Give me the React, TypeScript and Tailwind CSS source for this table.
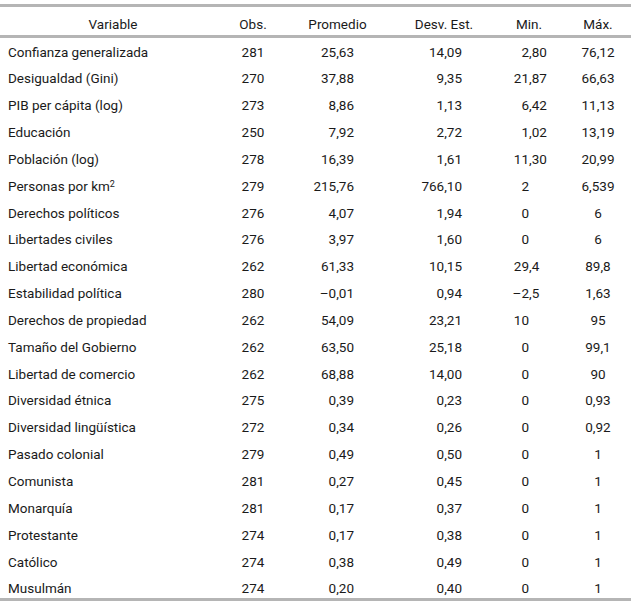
type Row = [string, string, string, string, string, string];

const rows: Row[] = [
  ["Confianza generalizada", "281", "25,63", "14,09", "2,80", "76,12"],
  ["Desigualdad (Gini)", "270", "37,88", "9,35", "21,87", "66,63"],
  ["PIB per cápita (log)", "273", "8,86", "1,13", "6,42", "11,13"],
  ["Educación", "250", "7,92", "2,72", "1,02", "13,19"],
  ["Población (log)", "278", "16,39", "1,61", "11,30", "20,99"],
  ["Personas por km", "279", "215,76", "766,10", "2", "6,539"],
  ["Derechos políticos", "276", "4,07", "1,94", "0", "6"],
  ["Libertades civiles", "276", "3,97", "1,60", "0", "6"],
  ["Libertad económica", "262", "61,33", "10,15", "29,4", "89,8"],
  ["Estabilidad política", "280", "–0,01", "0,94", "–2,5", "1,63"],
  ["Derechos de propiedad", "262", "54,09", "23,21", "10", "95"],
  ["Tamaño del Gobierno", "262", "63,50", "25,18", "0", "99,1"],
  ["Libertad de comercio", "262", "68,88", "14,00", "0", "90"],
  ["Diversidad étnica", "275", "0,39", "0,23", "0", "0,93"],
  ["Diversidad lingüística", "272", "0,34", "0,26", "0", "0,92"],
  ["Pasado colonial", "279", "0,49", "0,50", "0", "1"],
  ["Comunista", "281", "0,27", "0,45", "0", "1"],
  ["Monarquía", "281", "0,17", "0,37", "0", "1"],
  ["Protestante", "274", "0,17", "0,38", "0", "1"],
  ["Católico", "274", "0,38", "0,49", "0", "1"],
  ["Musulmán", "274", "0,20", "0,40", "0", "1"],
];

const cols = "grid grid-cols-[226px_54px_115px_98px_72px_66px]";

// min column is aligned on the decimal comma
function DecimalCell({ value }: { value: string }) {
  const [int, frac] = value.split(",");
  return (
    <div className="flex">
      <span className="w-[36px] text-right">{int}</span>
      {frac !== undefined && <span>,{frac}</span>}
    </div>
  );
}

export default function App() {
  return (
    <div className="w-[631px] h-[604px] bg-white text-[#1a1a1a] text-[13.5px] font-['Roboto',sans-serif] pt-[4px]">
      <div className="border-t-[3px] border-b-[3px] border-[#b5b5b5]">
        <div className={`${cols} leading-[16px] pt-[9px] pb-[3px] h-[28px] text-center`}>
          <div>Variable</div>
          <div>Obs.</div>
          <div>Promedio</div>
          <div>Desv. Est.</div>
          <div>Min.</div>
          <div>Máx.</div>
        </div>
      </div>

      <div className="border-b-[3px] border-[#b5b5b5]">
        {rows.map((r, i) => (
          <div key={i} className={`${cols} leading-[16px] pt-[5.5px] h-[26.85px] last:h-[22.85px]`}>
            <div className="pl-[8px]">
              {r[0]}
              {r[0] === "Personas por km" && <sup className="text-[9px] -top-[4px]">2</sup>}
            </div>
            <div className="text-center">{r[1]}</div>
            <div className="text-right pr-[41px]">{r[2]}</div>
            <div className="text-right pr-[31px]">{r[3]}</div>
            <DecimalCell value={r[4]} />
            <div className="text-center">{r[5]}</div>
          </div>
        ))}
      </div>
    </div>
  );
}
